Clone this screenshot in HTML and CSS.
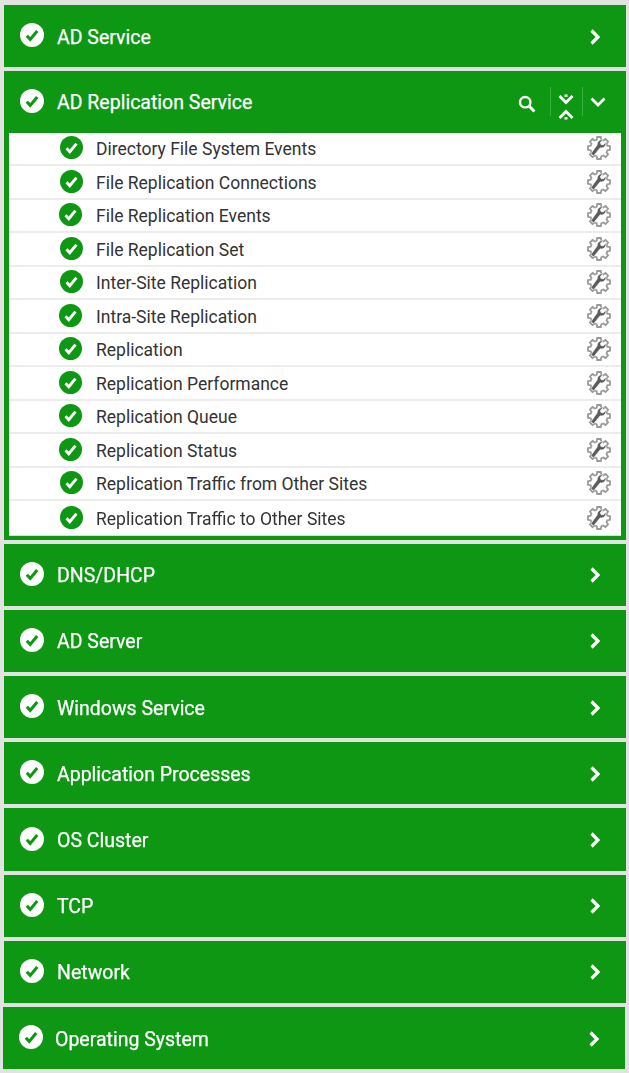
FILE: index.html
```html
<!DOCTYPE html>
<html lang="en">
<head>
<meta charset="utf-8">
<title>Service Health</title>
<link rel="stylesheet" href="styles.css">
</head>
<body>
<svg class="defs" width="0" height="0" aria-hidden="true">
  <defs>
    <symbol id="ok-white" viewBox="0 0 24 24">
      <circle cx="12" cy="12" r="12" fill="#fff"/>
      <path d="M6.800 12.800l3.400 3.600 7-8.400" fill="none" stroke="#0d9713" stroke-width="3"/>
    </symbol>
    <symbol id="ok-green" viewBox="0 0 24 24">
      <circle cx="12" cy="12" r="12" fill="#0d9713"/>
      <path d="M6.800 12.800l3.400 3.600 7-8.400" fill="none" stroke="#fff" stroke-width="3"/>
    </symbol>
    <path id="tooth" d="M-3.300-7.900L-2.300-8.300-1.800-11H1.800L2.300-8.300 3.300-7.900"/>
    <symbol id="gear" viewBox="-12 -12 24 24">
      <g fill="none" stroke="#999" stroke-width="1.800">
        <use href="#tooth"/>
        <use href="#tooth" transform="rotate(45)"/>
        <use href="#tooth" transform="rotate(90)"/>
        <use href="#tooth" transform="rotate(135)"/>
        <use href="#tooth" transform="rotate(180)"/>
        <use href="#tooth" transform="rotate(225)"/>
        <use href="#tooth" transform="rotate(270)"/>
        <use href="#tooth" transform="rotate(315)"/>
      </g>
      <path d="M-8 5.500L-5.500 8 1.200-.2C3.400.4 6-.6 6.800-3.400L7-5.800 4.200-3 1.900-3.600 1.400-5.800 4.200-8C1.200-8.800-1.800-6.900-1.900-3Z" fill="#5c5c5c" stroke="#fff" stroke-width=".6"/>
    </symbol>
    <symbol id="next" viewBox="0 0 12 18">
      <path d="M2.500 2.500L9 9l-6.500 6.500" fill="none" stroke="#fff" stroke-width="3.200"/>
    </symbol>
  </defs>
</svg>

<main class="stack">
  <section class="panel">
    <header class="head"><svg class="ok"><use href="#ok-white"/></svg><h2>AD Service</h2><svg class="next"><use href="#next"/></svg></header>
  </section>

  <section class="panel">
    <header class="head open">
      <svg class="ok"><use href="#ok-white"/></svg><h2>AD Replication Service</h2>
      <div class="tools">
        <svg class="search" viewBox="0 0 18 18"><circle cx="7.200" cy="7.200" r="5.200" fill="none" stroke="#fff" stroke-width="2.400"/><path d="M11 11l5.500 5.500" stroke="#fff" stroke-width="3"/></svg>
        <span class="rule"></span>
        <svg class="fold" viewBox="0 0 16 26"><path d="M6.500 .5h3v2.500h-3zM6.500 23h3v2.500h-3z" fill="#fff"/><path d="M1.500 2L8 8.500 14.500 2M1.500 24L8 17.500 14.500 24" fill="none" stroke="#fff" stroke-width="2.800"/></svg>
        <span class="rule"></span>
        <svg class="down" viewBox="0 0 16 10"><path d="M1.500 1.500L8 8l6.500-6.500" fill="none" stroke="#fff" stroke-width="2.800"/></svg>
      </div>
    </header>
    <ul class="rows">
      <li class="row"><svg class="mark"><use href="#ok-green"/></svg><span class="name">Directory File System Events</span><svg class="gear"><use href="#gear"/></svg></li>
      <li class="row"><svg class="mark"><use href="#ok-green"/></svg><span class="name">File Replication Connections</span><svg class="gear"><use href="#gear"/></svg></li>
      <li class="row"><svg class="mark nudge"><use href="#ok-green"/></svg><span class="name">File Replication Events</span><svg class="gear"><use href="#gear"/></svg></li>
      <li class="row"><svg class="mark"><use href="#ok-green"/></svg><span class="name">File Replication Set</span><svg class="gear"><use href="#gear"/></svg></li>
      <li class="row"><svg class="mark"><use href="#ok-green"/></svg><span class="name">Inter-Site Replication</span><svg class="gear"><use href="#gear"/></svg></li>
      <li class="row"><svg class="mark nudge"><use href="#ok-green"/></svg><span class="name">Intra-Site Replication</span><svg class="gear"><use href="#gear"/></svg></li>
      <li class="row"><svg class="mark nudge"><use href="#ok-green"/></svg><span class="name">Replication</span><svg class="gear"><use href="#gear"/></svg></li>
      <li class="row"><svg class="mark nudge"><use href="#ok-green"/></svg><span class="name">Replication Performance</span><svg class="gear"><use href="#gear"/></svg></li>
      <li class="row"><svg class="mark nudge"><use href="#ok-green"/></svg><span class="name">Replication Queue</span><svg class="gear"><use href="#gear"/></svg></li>
      <li class="row"><svg class="mark nudge"><use href="#ok-green"/></svg><span class="name">Replication Status</span><svg class="gear"><use href="#gear"/></svg></li>
      <li class="row"><svg class="mark"><use href="#ok-green"/></svg><span class="name">Replication Traffic from Other Sites</span><svg class="gear"><use href="#gear"/></svg></li>
      <li class="row"><svg class="mark"><use href="#ok-green"/></svg><span class="name">Replication Traffic to Other Sites</span><svg class="gear"><use href="#gear"/></svg></li>
    </ul>
  </section>

  <section class="panel"><header class="head"><svg class="ok"><use href="#ok-white"/></svg><h2>DNS/DHCP</h2><svg class="next"><use href="#next"/></svg></header></section>
  <section class="panel"><header class="head"><svg class="ok"><use href="#ok-white"/></svg><h2>AD Server</h2><svg class="next"><use href="#next"/></svg></header></section>
  <section class="panel"><header class="head"><svg class="ok"><use href="#ok-white"/></svg><h2>Windows Service</h2><svg class="next"><use href="#next"/></svg></header></section>
  <section class="panel"><header class="head"><svg class="ok"><use href="#ok-white"/></svg><h2>Application Processes</h2><svg class="next"><use href="#next"/></svg></header></section>
  <section class="panel"><header class="head"><svg class="ok"><use href="#ok-white"/></svg><h2>OS Cluster</h2><svg class="next"><use href="#next"/></svg></header></section>
  <section class="panel"><header class="head"><svg class="ok"><use href="#ok-white"/></svg><h2>TCP</h2><svg class="next"><use href="#next"/></svg></header></section>
  <section class="panel"><header class="head"><svg class="ok"><use href="#ok-white"/></svg><h2>Network</h2><svg class="next"><use href="#next"/></svg></header></section>
  <section class="panel last"><header class="head"><svg class="ok"><use href="#ok-white"/></svg><h2>Operating System</h2><svg class="next"><use href="#next"/></svg></header></section>
</main>
</body>
</html>
```

FILE: styles.css
```css
html, body {
  margin: 0;
  padding: 0;
  background: #e1e3e0;
}

body {
  font-family: Roboto, "Liberation Sans", sans-serif;
  overflow: hidden;
}

.defs {
  display: block;
  height: 0;
}

.stack {
  display: flex;
  flex-direction: column;
  gap: 4px;
  padding: 5px 3px 0 4px;
  filter: blur(0.35px);
}

.panel {
  background: #0d9713;
}

.last {
  margin-left: -1px;
  margin-right: 1px;
}

.head {
  display: flex;
  align-items: center;
  height: 62.2px;
  padding: 0 25px 0 16px;
  color: #fff;
}

.head.open {
  height: 61.5px;
}

.head h2 {
  flex: 1;
  margin: 0 0 0 13px;
  padding-top: 3px;
  font-size: 19.5px;
  font-weight: 400;
  line-height: 24px;
  -webkit-text-stroke: 0.25px #fff;
}

.last h2 {
  margin-left: 12px;
}

.ok {
  width: 24px;
  height: 24px;
  flex: none;
  margin-top: -2px;
}

.next {
  width: 12px;
  height: 18px;
  flex: none;
  margin-top: 1px;
}

.tools {
  display: flex;
  align-items: center;
  margin-right: -5px;
}

.search {
  width: 18px;
  height: 18px;
  margin-top: 4px;
}

.rule {
  width: 1px;
  height: 29px;
  background: #3dac41;
}

.search + .rule {
  margin-left: 14px;
}

.fold {
  width: 16px;
  height: 26px;
  margin: 10px 8px 0 7px;
}

.down {
  width: 16px;
  height: 10px;
  margin: 1px 0 0 7px;
}

.rows {
  list-style: none;
  margin: 0 5px;
  padding: 0;
  background: #fff;
  border-bottom: 1px solid #dcdcdc;
  margin-bottom: 4px;
}

.row {
  display: flex;
  align-items: center;
  height: 33.5px;
  box-sizing: border-box;
  padding: 0 10px 0 51px;
  border-bottom: 2px solid #ececec;
}

.row:last-child {
  border-bottom: 0;
}

.mark {
  width: 23px;
  height: 23px;
  flex: none;
  margin-top: -1px;
}

.mark.nudge {
  margin-left: -1.5px;
  margin-right: 1.5px;
}

.name {
  flex: 1;
  margin-left: 13px;
  padding-top: 1.4px;
  font-size: 17.5px;
  color: #333;
  line-height: 22px;
}

.gear {
  width: 24px;
  height: 24px;
  flex: none;
  filter: blur(0.4px);
}
```
